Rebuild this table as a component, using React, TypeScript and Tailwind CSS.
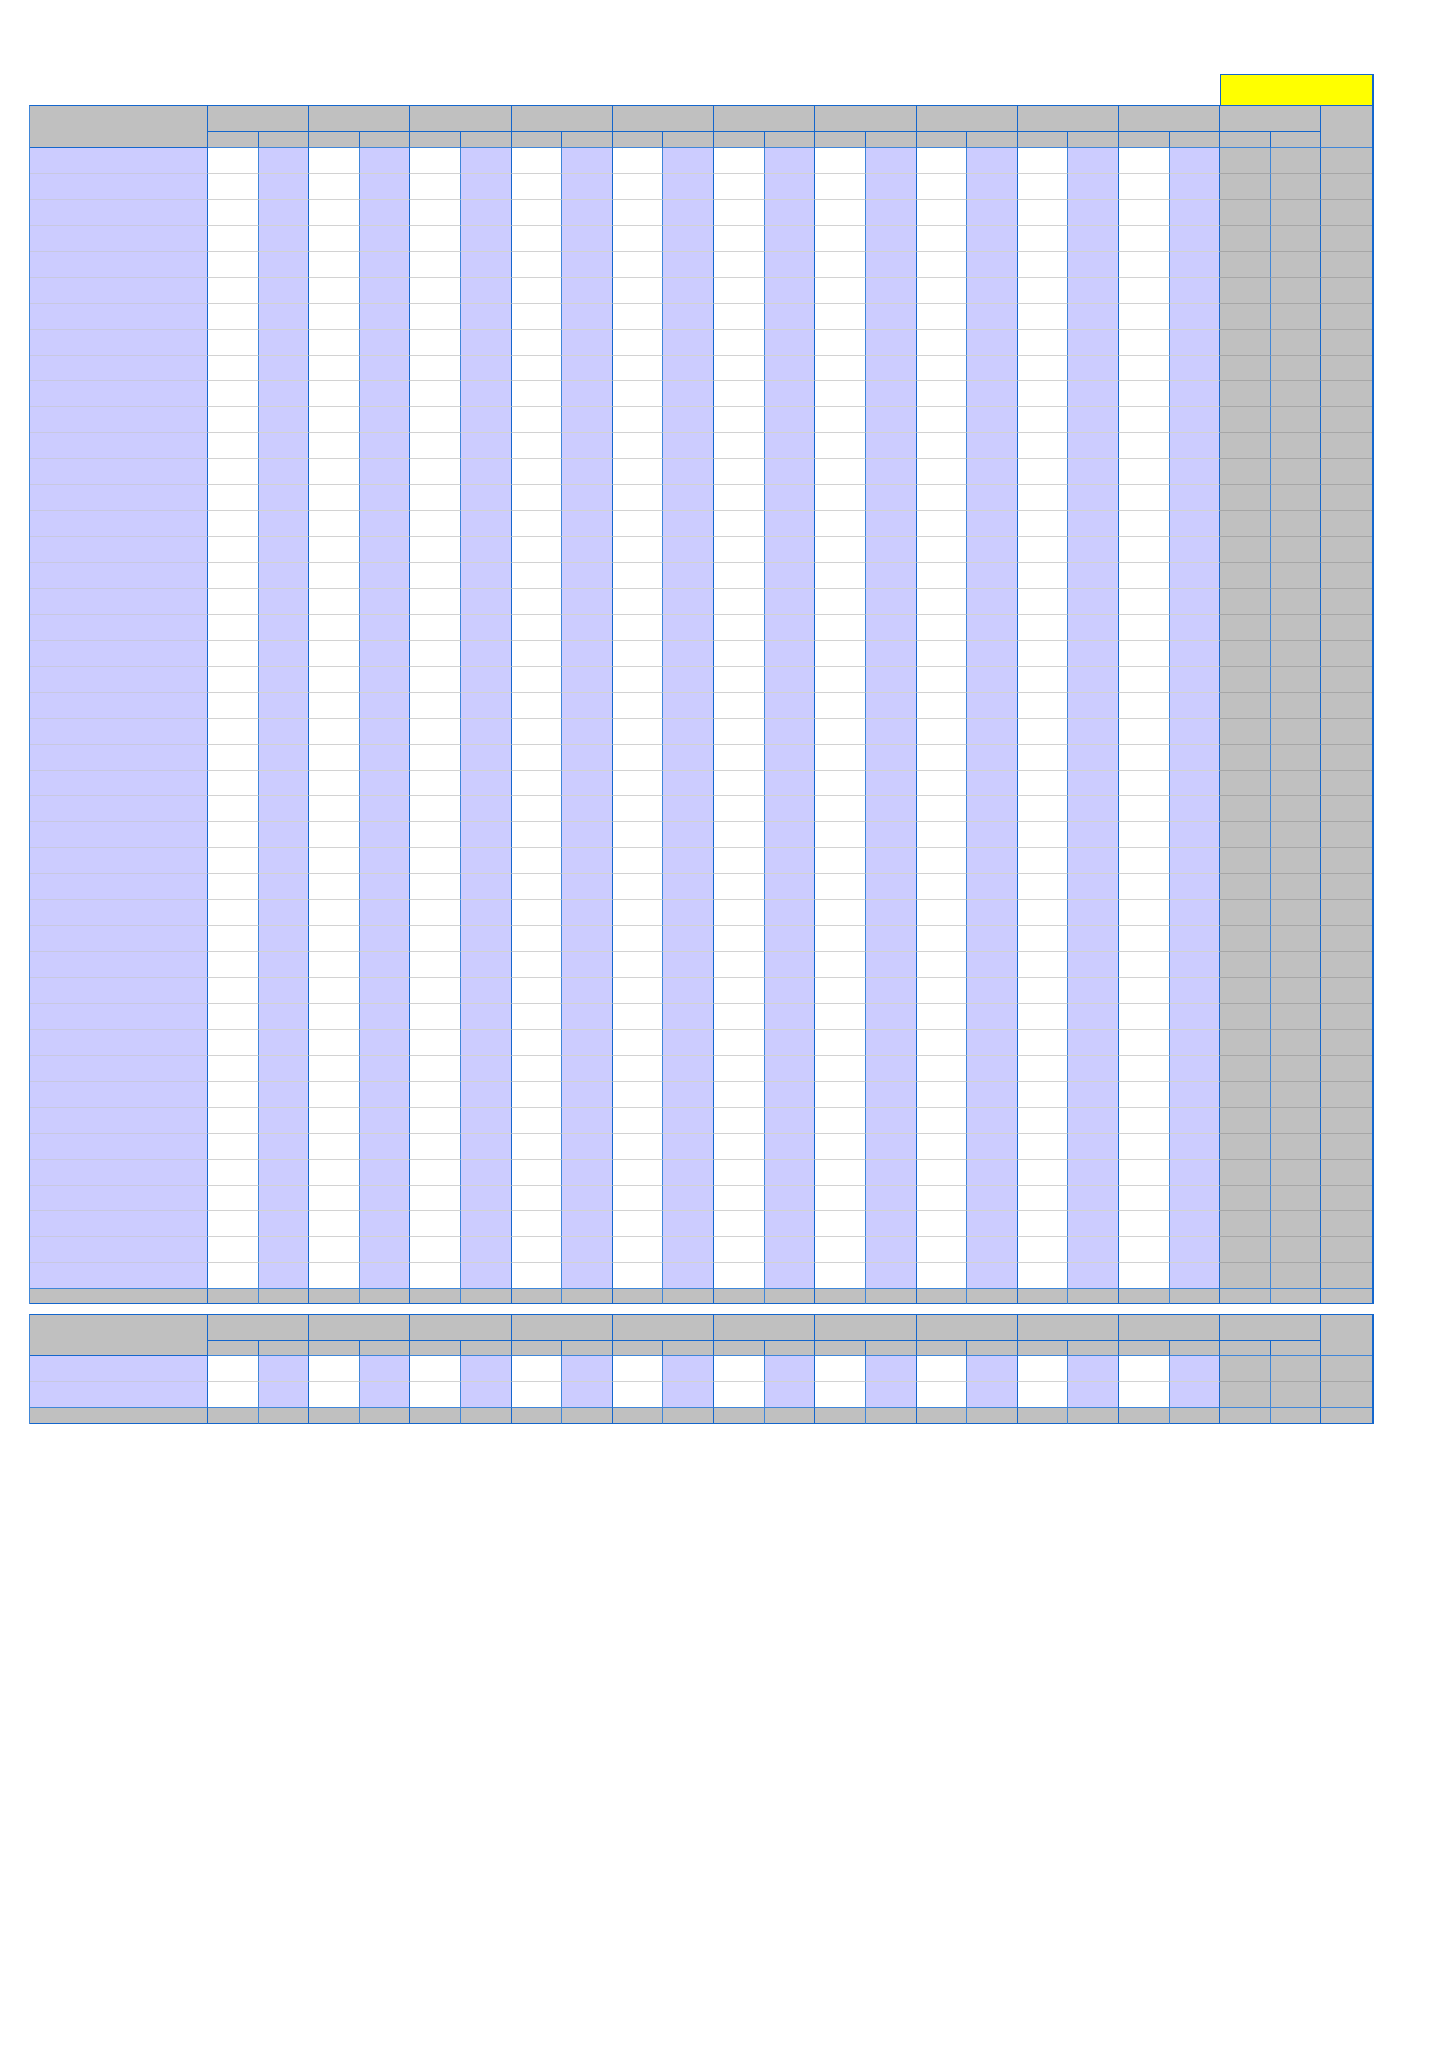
import React from "react";

const GRAY = "bg-[#c0c0c0]";
const LAV = "bg-[#ccccff]";
const WHITE = "bg-white";

function SheetTable({ rows, rowH, subH, footH }: { rows: number; rowH: string; subH: string; footH: string }) {
  const cells: React.ReactNode[] = [];
  cells.push(
    <div key="h0" className={`row-span-2 ${GRAY} border-r border-b border-[#1466cc]`} />
  );
  for (let g = 0; g < 11; g++) {
    cells.push(
      <div key={`hg${g}`} className={`col-span-2 h-[26px] ${GRAY} border-r border-b border-[#1466cc]`} />
    );
  }
  cells.push(<div key="hl" className={`row-span-2 ${GRAY} border-b border-[#3f86d8]`} />);
  for (let c = 0; c < 22; c++) {
    cells.push(
      <div key={`hs${c}`} className={`${subH} ${GRAY} border-r border-b border-r-[#1466cc] border-b-[#3f86d8]`} />
    );
  }
  for (let r = 0; r < rows; r++) {
    const last = r === rows - 1;
    const bb = last ? "border-b-[#3f86d8]" : "";
    cells.push(
      <div key={`r${r}f`} className={`${rowH} ${LAV} border-r border-b border-r-[#1466cc] ${last ? bb : "border-b-[#c8c8e0]"}`} />
    );
    for (let c = 0; c < 22; c++) {
      const grayCol = c >= 20;
      const bg = grayCol ? GRAY : c % 2 === 0 ? WHITE : LAV;
      const rowLine = grayCol ? "border-b-[#a6a6a6]" : "border-b-[#d2d2d2]";
      const colLine = c % 2 === 0 ? "border-r-[#3f86d8]" : "border-r-[#1466cc]";
      cells.push(
        <div key={`r${r}c${c}`} className={`${rowH} ${bg} border-r border-b ${colLine} ${last ? bb : rowLine}`} />
      );
    }
    cells.push(
      <div key={`r${r}l`} className={`${rowH} ${GRAY} border-b ${last ? bb : "border-b-[#a6a6a6]"}`} />
    );
  }
  cells.push(<div key="ff" className={`${footH} ${GRAY} border-r border-b border-[#1466cc]`} />);
  for (let c = 0; c < 22; c++) {
    const colLine = c % 2 === 0 ? "border-r-[#3f86d8]" : "border-r-[#1466cc]";
    cells.push(
      <div key={`f${c}`} className={`${footH} ${GRAY} border-r border-b border-b-[#1466cc] ${colLine}`} />
    );
  }
  cells.push(<div key="fl" className={`${footH} ${GRAY} border-b border-[#1466cc]`} />);

  return (
    <div className="w-[1345px] grid grid-cols-[178px_repeat(23,minmax(0,1fr))] border-l border-t border-r-2 border-[#1466cc] border-l-[#3f86d8]">
      {cells}
    </div>
  );
}

export default function App() {
  return (
    <div className="min-h-[2059px] w-full bg-white pt-[74px] pl-[29px]" style={{ fontFamily: '"Liberation Sans", Arial, sans-serif' }}>
      <div className="w-[1345px] flex justify-end">
        <div className="w-[154px] h-[31px] bg-[#ffff00] border-t border-l border-r-2 border-[#1466cc]" />
      </div>
      <SheetTable rows={44} rowH="h-[25.94px]" subH="h-[16px]" footH="h-[15px]" />
      <div className="h-[10px]" />
      <SheetTable rows={2} rowH="h-[26px]" subH="h-[15px]" footH="h-[16px]" />
    </div>
  );
}
